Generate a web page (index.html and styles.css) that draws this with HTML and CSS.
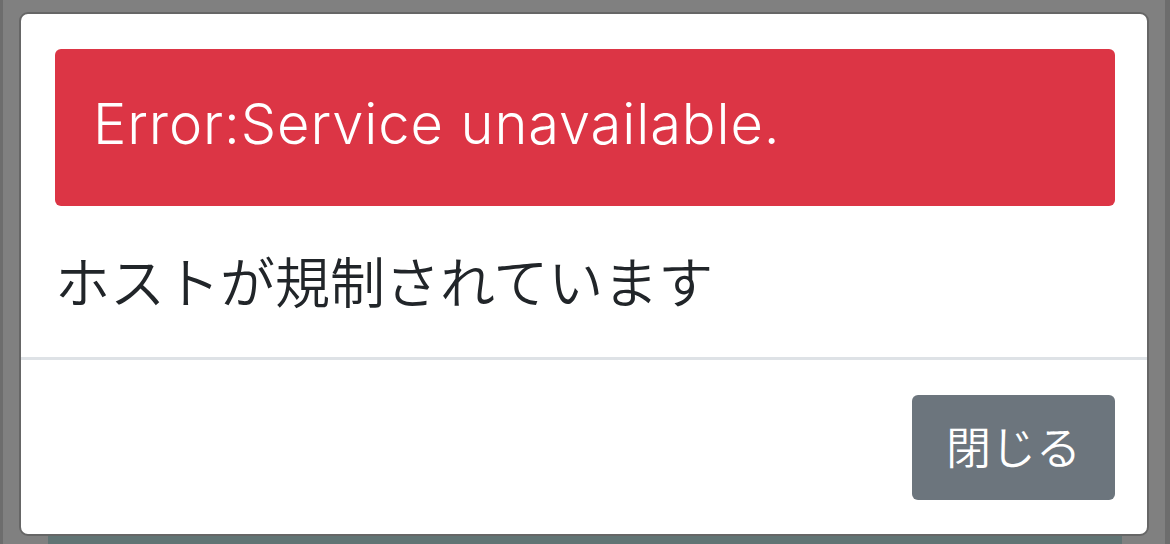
FILE: index.html
```html
<!DOCTYPE html>
<html lang="ja">

<head>
    <meta charset="UTF-8">
    <title>エラー</title>
    <link rel="stylesheet" href="styles.css">
</head>

<body>
    <div class="page">
        <div class="modal">
            <div class="modal-body">
                <div class="alert">Error:Service unavailable.</div>
                <p class="message">ホストが規制されています</p>
            </div>
            <div class="modal-footer">
                <button class="btn-close">閉じる</button>
            </div>
        </div>
        <div class="behind"></div>
    </div>
</body>

</html>
```

FILE: styles.css
```css
html, body {
    margin: 0;
    height: 100%;
    overflow: hidden;
}

body {
    background: #808080;
    font-family: "Noto Sans CJK JP", "Noto Sans", sans-serif;
    color: #212529;
}

.page {
    height: 100%;
    border-left: 3px solid #6d6d6d;
    border-right: 5px solid #6d6d6d;
    padding-top: 12px;
    box-sizing: border-box;
}

.modal {
    margin-left: 16px;
    width: 1126px;
    background: #fff;
    border: 2px solid #666;
    border-radius: 9px;
}

.modal-body {
    padding: 35px 32px 37px 34px;
    border-bottom: 3px solid #dee2e6;
}

.alert {
    height: 157px;
    box-sizing: border-box;
    padding: 0 0 8px 38px;
    display: flex;
    align-items: center;
    background: #dc3545;
    color: #fff;
    border-radius: 6px;
    font-family: Inter, "Noto Sans CJK JP", sans-serif;
    font-size: 56px;
    font-weight: 300;
    letter-spacing: 0.9px;
}

.message {
    margin: 32px 0 0;
    font-size: 55px;
    line-height: 82px;
    font-weight: 350;
}

.modal-footer {
    display: flex;
    justify-content: flex-end;
    padding: 35px 32px 34px;
}

.btn-close {
    width: 203px;
    height: 105px;
    padding: 0 0 4px;
    border: none;
    border-radius: 6px;
    background: #6c757d;
    color: #fff;
    font-family: inherit;
    font-size: 45px;
    font-weight: 350;
}

.behind {
    margin-left: 45px;
    width: 1074px;
    height: 8px;
    background: #617474;
}
```
